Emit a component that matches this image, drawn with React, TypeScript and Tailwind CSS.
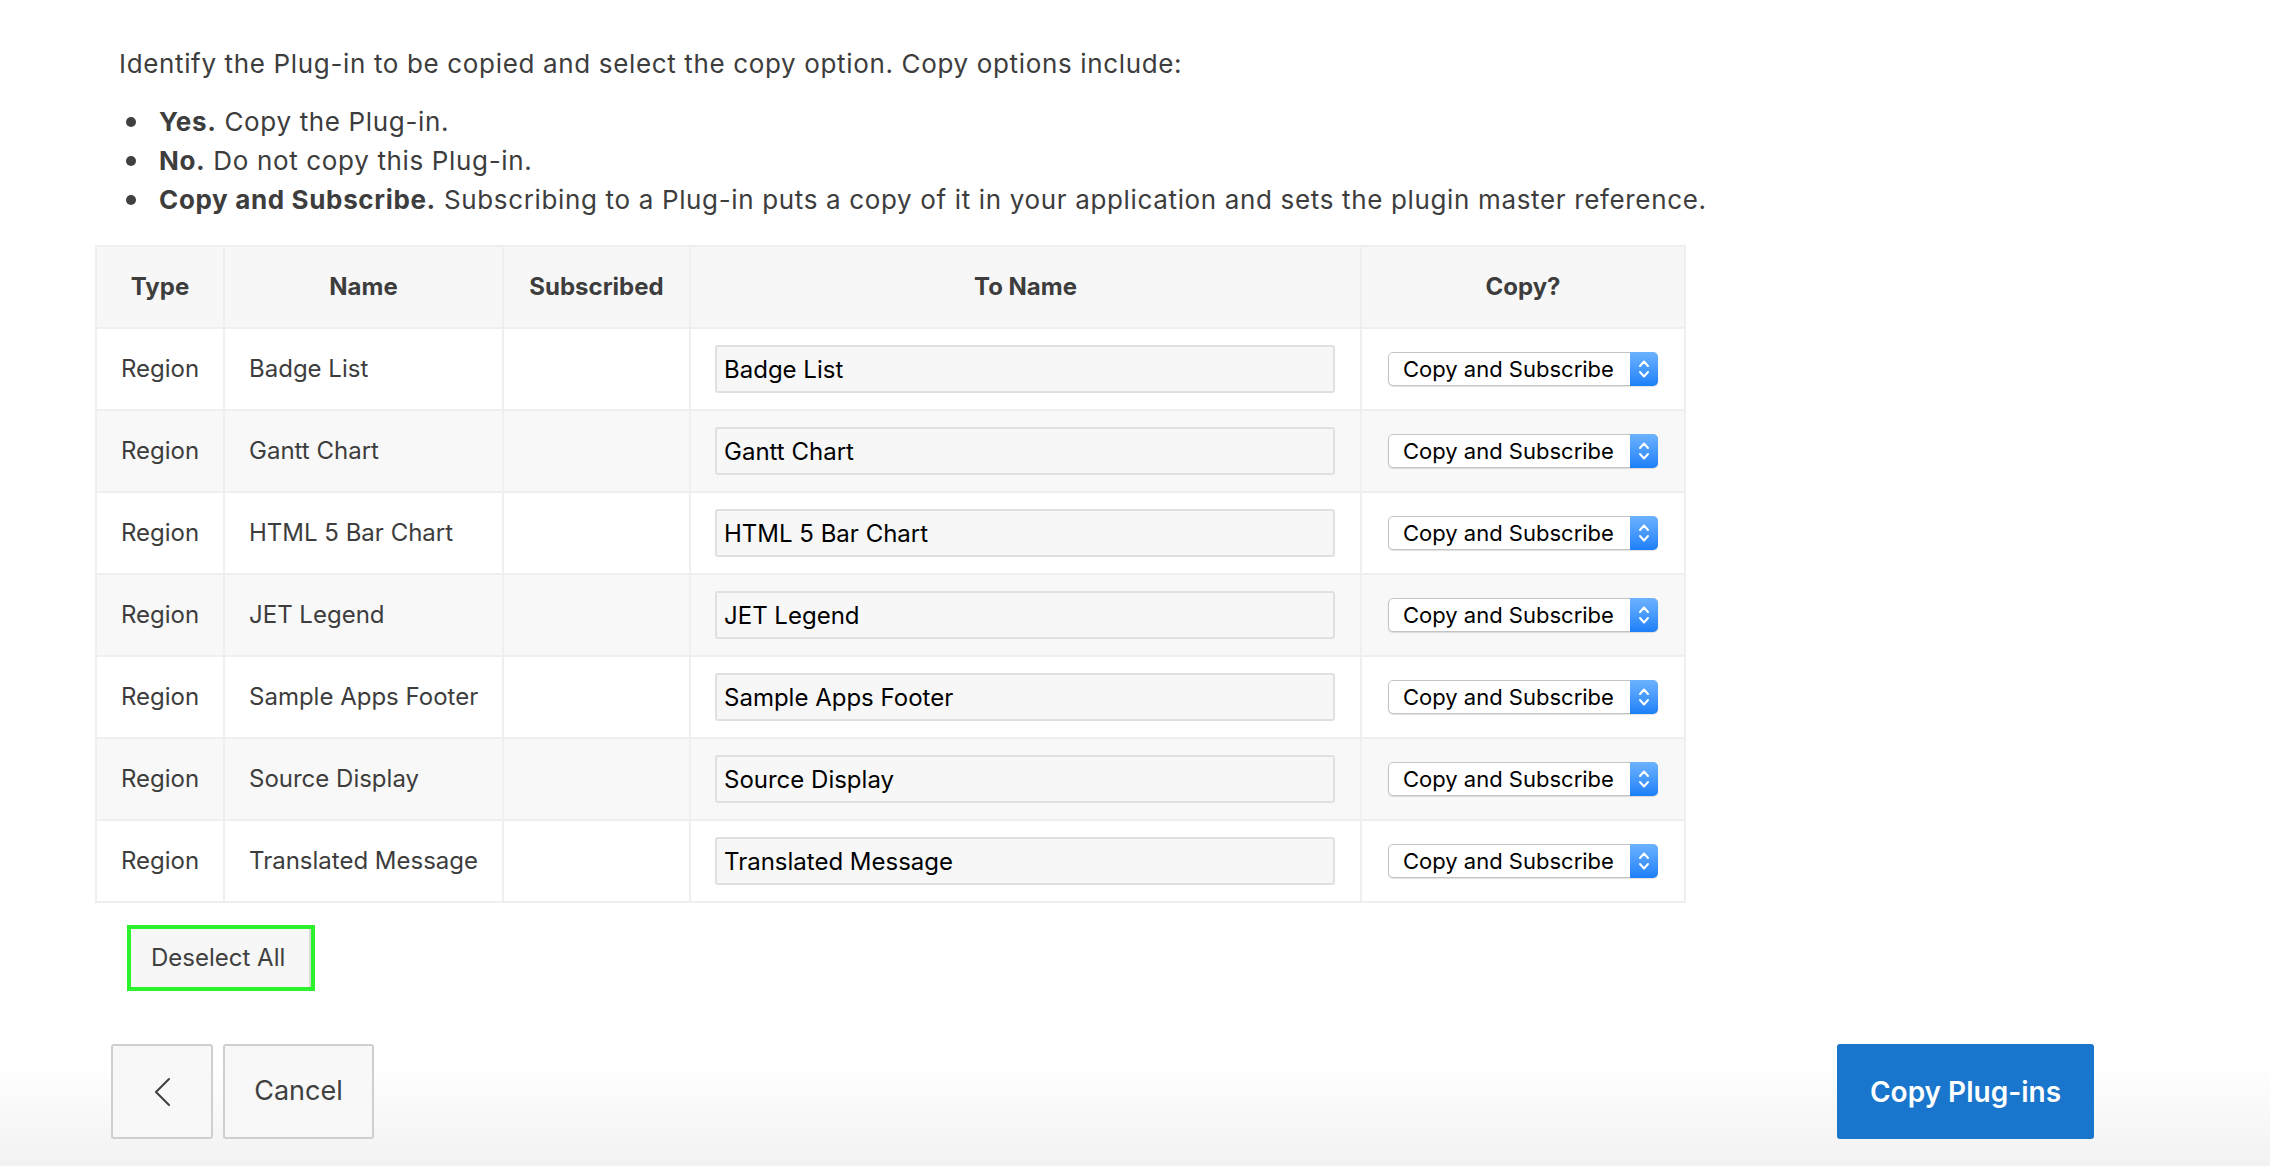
const rows = [
  'Badge List',
  'Gantt Chart',
  'HTML 5 Bar Chart',
  'JET Legend',
  'Sample Apps Footer',
  'Source Display',
  'Translated Message',
]

function CopySelect() {
  return (
    <div className="mx-auto flex h-[34px] w-[270px] items-stretch rounded-[5px] border border-[#c4c4c4] bg-white shadow-[0_1px_1px_rgba(0,0,0,0.12)]">
      <span className="flex flex-1 items-center pl-[14px] text-[22px] text-black">Copy and Subscribe</span>
      <span className="-my-px -mr-px flex w-[28px] items-center justify-center rounded-r-[5px] bg-gradient-to-b from-[#6cb3ff] to-[#1a7ff8]">
        <svg width="12" height="22" viewBox="0 0 12 22" fill="none" stroke="white" strokeWidth="2" strokeLinecap="round" strokeLinejoin="round">
          <path d="M2 8 L6 3.5 L10 8" />
          <path d="M2 14 L6 18.5 L10 14" />
        </svg>
      </span>
    </div>
  )
}

export default function App() {
  return (
    <div className="flex min-h-[1166px] flex-col bg-white font-['Inter',sans-serif] text-[#3d3d3d]">
      <div className="flex-1 pl-[95px] pt-[46px]">
        <p className="pl-[24px] text-[26px] leading-[36px] tracking-[0.025em]">
          Identify the Plug-in to be copied and select the copy option. Copy options include:
        </p>
        <ul className="mt-[20px] pl-[24px] text-[26px] leading-[39px] tracking-[0.025em]">
          <li className="flex items-center">
            <span className="ml-[7px] mr-[23px] h-[10px] w-[10px] rounded-full bg-[#404040]" />
            <span><b className="font-bold">Yes.</b> Copy the Plug-in.</span>
          </li>
          <li className="flex items-center">
            <span className="ml-[7px] mr-[23px] h-[10px] w-[10px] rounded-full bg-[#404040]" />
            <span><b className="font-bold">No.</b> Do not copy this Plug-in.</span>
          </li>
          <li className="flex items-center">
            <span className="ml-[7px] mr-[23px] h-[10px] w-[10px] rounded-full bg-[#404040]" />
            <span>
              <b className="font-bold">Copy and Subscribe.</b> Subscribing to a Plug-in puts a copy of it in your application and sets the plugin master reference.
            </span>
          </li>
        </ul>

        <table className="mt-[26px] w-[1589px] table-fixed border-collapse text-[24px]">
          <colgroup>
            <col className="w-[128px]" />
            <col className="w-[279px]" />
            <col className="w-[187px]" />
            <col className="w-[671px]" />
            <col className="w-[324px]" />
          </colgroup>
          <thead>
            <tr className="h-[82px] bg-[#f7f7f7] text-[24px] font-bold">
              <th className="border-2 border-[#efefef]">Type</th>
              <th className="border-2 border-[#efefef]">Name</th>
              <th className="border-2 border-[#efefef]">Subscribed</th>
              <th className="border-2 border-[#efefef]">To Name</th>
              <th className="border-2 border-[#efefef]">Copy?</th>
            </tr>
          </thead>
          <tbody>
            {rows.map((name, i) => (
              <tr key={name} className={`h-[82px] ${i % 2 === 1 ? 'bg-[#f8f8f8]' : 'bg-white'}`}>
                <td className="border-2 border-[#efefef] pl-[24px]">Region</td>
                <td className="border-2 border-[#efefef] pl-[24px]">{name}</td>
                <td className="border-2 border-[#efefef]" />
                <td className="border-2 border-[#efefef] pl-[24px] pr-[25px]">
                  <input
                    readOnly
                    defaultValue={name}
                    className="h-[48px] w-full rounded-[3px] border-2 border-[#e0e0e0] bg-[#f7f7f7] pl-[7px] text-[24px] text-black outline-none"
                  />
                </td>
                <td className="border-2 border-[#efefef]">
                  <CopySelect />
                </td>
              </tr>
            ))}
          </tbody>
        </table>

        <div className="ml-[32px] mt-[22px] inline-block border-[4px] border-[#2cf22e]">
          <button className="h-[58px] w-[180px] border-r-2 border-[#d8d8d8] bg-[#f7f7f7] pl-[6px] text-left text-[24px] text-[#404040]">
            <span className="pl-[14px]">Deselect All</span>
          </button>
        </div>
      </div>

      <div className="flex h-[146px] items-start justify-between bg-gradient-to-b from-white from-30% to-[#f2f2f2] pl-[111px] pr-[176px] pt-[24px]">
        <div className="flex gap-[10px]">
          <button className="flex h-[95px] w-[102px] items-center justify-center rounded-[3px] border-2 border-[#cfcfcf] bg-[#f8f8f8]">
            <svg width="18" height="30" viewBox="0 0 18 30" fill="none" stroke="#404040" strokeWidth="2" strokeLinecap="round" strokeLinejoin="round">
              <path d="M16 2 L3 15 L16 28" />
            </svg>
          </button>
          <button className="h-[95px] w-[151px] rounded-[3px] border-2 border-[#cfcfcf] bg-[#f8f8f8] text-[27px] text-[#404040]">
            Cancel
          </button>
        </div>
        <button className="h-[95px] w-[257px] rounded-[3px] bg-[#1976cc] text-[28px] font-semibold text-white">
          Copy Plug-ins
        </button>
      </div>
    </div>
  )
}
